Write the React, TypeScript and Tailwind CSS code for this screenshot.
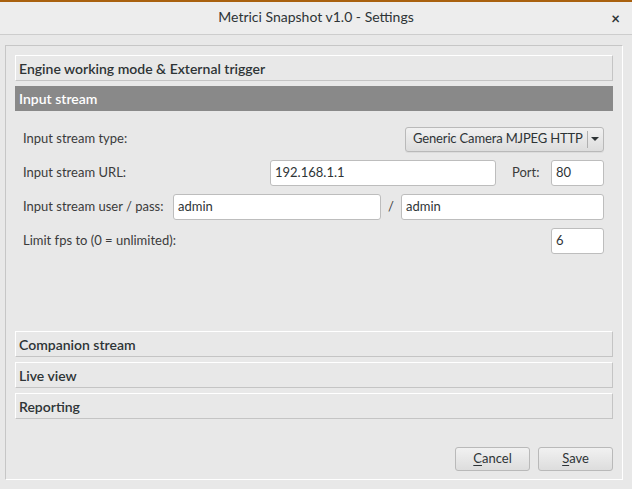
import { useState } from "react";

// Settings dialog: accordion of sections, the "Input stream" one is open
const sections = [
  "Engine working mode & External trigger",
  "Input stream",
  "Companion stream",
  "Live view",
  "Reporting",
];

function SectionHeader({ title, active }: { title: string; active?: boolean }) {
  return (
    <div
      className={
        active
          ? "h-[25px] shrink-0 flex items-center px-[4px] bg-[#898989] text-white font-semibold text-[14px]"
          : "h-[26px] shrink-0 flex items-center px-[3px] bg-[#e8e8e8] border-t border-l border-white border-b border-r border-b-[#c4c4c4] border-r-[#c4c4c4] text-[#2e3436] font-semibold text-[14px]"
      }
    >
      {title}
    </div>
  );
}

function TextInput({ value, className }: { value: string; className: string }) {
  return (
    <div
      className={
        "h-[26px] bg-white border border-[#bdbdbd] rounded-[3px] flex items-center px-[4px] text-[13px] text-[#2e3436] " +
        className
      }
    >
      {value}
    </div>
  );
}

export default function App() {
  const [openSection] = useState("Input stream");

  return (
    <div
      className="w-[632px] h-[489px] bg-[#e8e8e8] flex flex-col overflow-hidden"
      style={{ fontFamily: 'Lato, "Noto Sans", sans-serif' }}
    >
      {/* Title bar */}
      <div className="h-[2px] bg-[#a9610f]" />
      <div className="h-[33px] bg-[#ededed] border-b border-[#cdcdcd] flex items-center relative">
        <div className="flex-1 text-center text-[14px] text-[#2e3436] -mt-[3px]">Metrici Snapshot v1.0 - Settings</div>
        <div className="absolute right-[12px] top-[5px] text-[15px] font-bold text-[#2e3436]">×</div>
      </div>

      {/* Frame */}
      <div className="mt-[10px] ml-[5px] mr-[9px] h-[435px] border-t border-l border-[#c6c6c6] border-b border-r border-b-white border-r-white px-[9px] pt-[9px] flex flex-col">
        <SectionHeader title={sections[0]} />
        <div className="h-[5px] shrink-0" />
        <SectionHeader title={sections[1]} active={openSection === "Input stream"} />

        {/* Input stream content */}
        <div className="h-[220px] shrink-0 pl-[8px] pr-[9px] pt-[15px] flex flex-col gap-[8px] text-[13px] text-[#3b3b3b]">
          <div className="h-[26px] flex items-center">
            <span className="flex-1">Input stream type:</span>
            <div className="w-[199px] h-[25px] rounded-[3px] border border-[#b9b9b9] bg-gradient-to-b from-[#f1f1f1] to-[#dddddd] flex items-center pl-[7px] pr-[3px] text-[#2e3436] shadow-[0_1px_0_rgba(0,0,0,0.05)]">
              <span className="flex-1 whitespace-nowrap tracking-[-0.15px]">Generic Camera MJPEG HTTP</span>
              <span className="w-px h-[17px] bg-[#b0b0b0] mr-[2px]" />
              <svg width="10" height="6" viewBox="0 0 10 6">
                <path d="M1 1 L9 1 L5 5 Z" fill="#2e3436" />
              </svg>
            </div>
          </div>
          <div className="h-[26px] flex items-center">
            <span className="w-[247px]">Input stream URL:</span>
            <TextInput value="192.168.1.1" className="w-[226px]" />
            <span className="ml-[16px] w-[39px]">Port:</span>
            <TextInput value="80" className="w-[53px]" />
          </div>
          <div className="h-[26px] flex items-center">
            <span className="w-[150px] whitespace-nowrap">Input stream user / pass:</span>
            <TextInput value="admin" className="w-[208px]" />
            <span className="w-[20px] text-center">/</span>
            <TextInput value="admin" className="w-[203px]" />
          </div>
          <div className="h-[26px] flex items-center">
            <span className="flex-1">Limit fps to (0 = unlimited):</span>
            <TextInput value="6" className="w-[53px]" />
          </div>
        </div>

        <div className="flex flex-col gap-[5px]">
          <SectionHeader title={sections[2]} />
          <SectionHeader title={sections[3]} />
          <SectionHeader title={sections[4]} />
        </div>

        {/* Buttons */}
        <div className="mt-[28px] flex justify-end gap-[8px]">
          <button className="w-[75px] h-[24px] rounded-[3px] border border-[#b9b9b9] bg-gradient-to-b from-[#f1f1f1] to-[#dddddd] text-[13px] text-[#2e3436]">
            <span className="underline underline-offset-2">C</span>ancel
          </button>
          <button className="w-[75px] h-[24px] rounded-[3px] border border-[#b9b9b9] bg-gradient-to-b from-[#f1f1f1] to-[#dddddd] text-[13px] text-[#2e3436]">
            <span className="underline underline-offset-2">S</span>ave
          </button>
        </div>
      </div>
    </div>
  );
}
